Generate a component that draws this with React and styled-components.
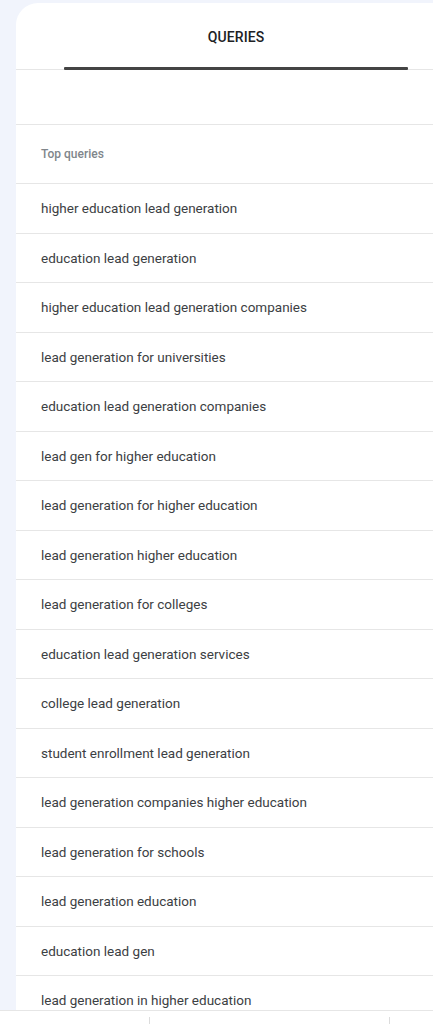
import React from 'react';
import styled, { createGlobalStyle } from 'styled-components';

const GlobalStyle = createGlobalStyle`
  html, body {
    margin: 0;
    padding: 0;
    background: #f1f4fc;
    font-family: Roboto, "Liberation Sans", Arial, sans-serif;
    overflow: hidden;
  }
`;

const queries = [
  'higher education lead generation',
  'education lead generation',
  'higher education lead generation companies',
  'lead generation for universities',
  'education lead generation companies',
  'lead gen for higher education',
  'lead generation for higher education',
  'lead generation higher education',
  'lead generation for colleges',
  'education lead generation services',
  'college lead generation',
  'student enrollment lead generation',
  'lead generation companies higher education',
  'lead generation for schools',
  'lead generation education',
  'education lead gen',
  'lead generation in higher education',
];

const Page = styled.div`
  padding: 3px 0 0 16px;
  width: 460px;
`;

const Card = styled.div`
  background: #fff;
  width: 440px;
  border-top-left-radius: 22px;
  min-height: 1100px;
`;

const TabBar = styled.div`
  display: flex;
  border-bottom: 1px solid #e6e6e6;
`;

const Tab = styled.div`
  flex: 1;
  height: 66px;
  display: flex;
  flex-direction: column;
  align-items: center;
`;

const TabLabel = styled.div`
  flex: 1;
  display: flex;
  align-items: center;
  padding-top: 3px;
  font-size: 14px;
  font-weight: 500;
  color: #202124;
  letter-spacing: 0.1px;
`;

const Indicator = styled.div`
  align-self: stretch;
  margin: 0 48px -1px;
  height: 3px;
  background: #444;
  border-radius: 1px;
`;

const Spacer = styled.div`
  height: 54px;
  border-bottom: 1px solid #e6e6e6;
`;

const Row = styled.div`
  display: flex;
  align-items: center;
  height: ${(p) => (p.$head ? '58px' : '48.5px')};
  padding-left: 25px;
  border-bottom: 1px solid #e6e6e6;
  font-size: ${(p) => (p.$head ? '12px' : '13.5px')};
  font-weight: ${(p) => (p.$head ? 500 : 400)};
  color: ${(p) => (p.$head ? '#80868b' : '#3c4043')};
`;

const BottomBar = styled.div`
  position: fixed;
  left: 0;
  right: 0;
  bottom: 0;
  box-sizing: border-box;
  height: 14px;
  background: #fff;
  border-top: 1px solid #e6e6e6;
  display: grid;
  grid-template-columns: 150px 240px 1fr;
  padding-top: 6px;
`;

const Cell = styled.div`
  border-right: ${(p) => (p.$divider ? '1px solid #dcdcdc' : 'none')};
`;

export default function App() {
  return (
    <>
      <GlobalStyle />
      <Page>
        <Card>
          <TabBar>
            <Tab>
              <TabLabel>QUERIES</TabLabel>
              <Indicator />
            </Tab>
          </TabBar>
          <Spacer />
          <Row $head>Top queries</Row>
          {queries.map((q) => (
            <Row key={q}>{q}</Row>
          ))}
        </Card>
      </Page>
      <BottomBar>
        <Cell $divider />
        <Cell $divider />
        <Cell />
      </BottomBar>
    </>
  );
}
